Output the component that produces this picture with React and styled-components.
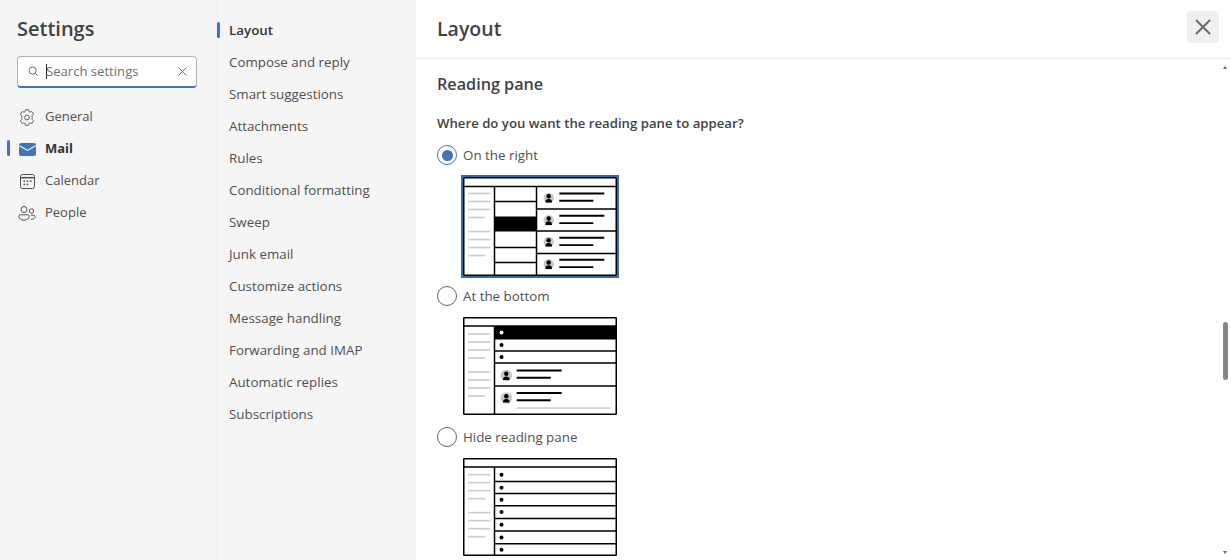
import React from 'react';
import styled, { createGlobalStyle } from 'styled-components';

const Global = createGlobalStyle`
  html, body { margin: 0; padding: 0; height: 100%; overflow: hidden; background: #fff; }
  #root { height: 100%; }
`;
const Page = styled.div`
  display: flex; height: 560px; width: 1231px; overflow: hidden;
  font-family: "Open Sans", "Noto Sans", sans-serif; color: #424242; font-size: 13.35px;
`;
const LeftPane = styled.aside`
  width: 216px; flex: none; background: #f5f5f5; border-right: 1px solid #eeeeee; box-sizing: content-box;
  padding-top: 14px;
`;
const Title = styled.h1`
  margin: 0 0 13px 17px; font-size: 20px; line-height: 29px; font-weight: 600; color: #424242;
`;
const SearchBox = styled.div`
  margin-left: 17px; width: 180px; height: 32px; box-sizing: border-box; background: #fff;
  border: 1px solid #b3b3b3; border-bottom: 2px solid #3f74bb; border-radius: 4px;
  display: flex; align-items: center; padding: 0 9px 1px 10px;
`;
const Caret = styled.span`
  width: 1px; height: 15px; background: #222; margin: 0 -1px 0 7px; flex: none;
`;
const SearchText = styled.span`
  flex: 1; color: #707070; font-size: 13.1px; white-space: nowrap;
`;
const NavList = styled.nav`
  margin-top: 12px; display: flex; flex-direction: column;
`;
const NavRow = styled.div`
  position: relative; height: 32px; display: flex; align-items: center; padding-left: 18px; gap: 9px;
  font-size: 13px;
  font-weight: ${p => (p.$active ? 700 : 400)}; color: ${p => (p.$active ? '#333' : '#505050')};
`;
const IconSlot = styled.span`
  width: 18px; height: 18px; flex: none; margin-top: 3px;
  display: flex; align-items: center; justify-content: center;
`;
const ActiveBar = styled.span`
  position: absolute; left: ${p => p.$left}px; top: 8px; width: 3px; height: 16px; border-radius: 2px; background: #3f74bb;
`;
const MiddlePane = styled.nav`
  width: 199px; flex: none; background: #f5f5f5; padding-top: 14px; display: flex; flex-direction: column;
`;
const SubRow = styled.div`
  position: relative; height: 32px; display: flex; align-items: center; padding-left: 12px; white-space: nowrap;
  font-weight: ${p => (p.$active ? 600 : 400)}; color: ${p => (p.$active ? '#333' : '#505050')};
`;
const Content = styled.main`
  position: relative; flex: 1; min-width: 0; display: flex; flex-direction: column; background: #fff;
`;
const Header = styled.header`
  height: 58px; flex: none; box-sizing: content-box; border-bottom: 1px solid #ededed;
  display: flex; align-items: center; justify-content: space-between; padding: 0 12px 0 21px;
`;
const HeaderTitle = styled.h2`
  margin: -2px 0 0; font-size: 19.5px; font-weight: 600; color: #424242;
`;
const CloseButton = styled.button`
  width: 32px; height: 32px; border: 0; border-radius: 4px; background: #f0f0f0; padding: 0;
  display: flex; align-items: center; justify-content: center; margin-top: -4px;
`;
const Body = styled.div`
  flex: 1; overflow: hidden; padding: 13px 0 0 21px;
`;
const SectionTitle = styled.h3`
  margin: 0; font-size: 16.2px; line-height: 24px; font-weight: 600; color: #424242;
`;
const Question = styled.div`
  margin-top: 18px; font-weight: 600; font-size: 13.2px; color: #424242; line-height: 18px;
`;
const Options = styled.div`
  margin-top: 13px; display: flex; flex-direction: column;
`;
const RadioRow = styled.div`
  display: flex; align-items: center; gap: 6px; height: 20px; color: #505050;
`;
const Radio = styled.span`
  width: 20px; height: 20px; box-sizing: border-box; border-radius: 50%; flex: none;
  border: 1px solid ${p => (p.$on ? '#3f74bb' : '#616161')};
  display: flex; align-items: center; justify-content: center;
  &::after { content: ''; width: 11px; height: 11px; border-radius: 50%; background: ${p => (p.$on ? '#3f74bb' : 'transparent')}; }
`;
const Preview = styled.div`
  margin: ${p => p.$mt}px 0 ${p => p.$mb}px 26px; width: 154px; height: ${p => p.$h}px; line-height: 0;
  outline: ${p => (p.$on ? '2px solid #3a689f' : 'none')}; outline-offset: 0;
`;
const Thumb = styled.div`
  position: absolute; right: 3px; top: 322px; width: 5px; height: 58px; border-radius: 3px; background: #858585;
`;
const Arrow = styled.div`
  position: absolute; right: 4px; top: ${p => p.$top}px; width: 0; height: 0;
  border-left: 2px solid transparent; border-right: 2px solid transparent;
  ${p => (p.$down ? 'border-top: 3px solid #666;' : 'border-bottom: 3px solid #666;')}
`;

const Gear = () => (
  <svg width="19" height="19" viewBox="0 0 20 20" fill="none" stroke="#505050" strokeWidth="1" strokeLinejoin="round">
    <path d="M8.2 1.5c1.2-.3 2.4-.3 3.6 0l.5 1.9c.1.5.7.8 1.2.6l1.9-.6c.8.9 1.5 2 1.8 3.1l-1.4 1.4c-.4.4-.4 1 0 1.4v1.4c-.4.4-.4 1 0 1.4l1.4 1.4c-.3 1.1-1 2.2-1.8 3.1l-1.9-.6c-.5-.2-1.1.1-1.2.6l-.5 1.9c-1.2.3-2.4.3-3.6 0l-.5-1.9c-.1-.5-.7-.8-1.2-.6l-1.9.6c-.8-.9-1.5-2-1.8-3.1l1.4-1.4c.4-.4.4-1 0-1.4V9.7c.4-.4.4-1 0-1.4L2.8 6.5C3.1 5.4 3.8 4.3 4.6 3.4l1.9.6c.5.2 1.1-.1 1.2-.6z" />
    <circle cx="10" cy="10" r="2.7" />
  </svg>
);
const MailIcon = () => (
  <svg width="17" height="13" viewBox="0 0 17 13">
    <rect width="17" height="13" rx="2" fill="#3f74bb" />
    <path d="M0.5 2.8 8.5 7.4l8-4.6" fill="none" stroke="#fff" strokeWidth="1.1" />
  </svg>
);
const CalendarIcon = () => (
  <svg width="15" height="15" viewBox="0 0 15 15" fill="none" stroke="#505050" strokeWidth="1">
    <rect x="0.5" y="0.5" width="14" height="14" rx="2" />
    <path d="M0.5 3.7h14" strokeWidth="1.5" />
    <g fill="#505050" stroke="none">
      <rect x="3.5" y="6.3" width="1.6" height="1.6" /><rect x="6.7" y="6.3" width="1.6" height="1.6" /><rect x="9.9" y="6.3" width="1.6" height="1.6" />
      <rect x="3.5" y="9.6" width="1.6" height="1.6" /><rect x="6.7" y="9.6" width="1.6" height="1.6" />
    </g>
  </svg>
);
const PeopleIcon = () => (
  <svg width="18" height="15" viewBox="0 0 18 15" fill="none" stroke="#505050" strokeWidth="1">
    <circle cx="6" cy="3.5" r="3" />
    <circle cx="13.5" cy="5" r="2.2" />
    <path d="M.8 10.2c0-.9.7-1.4 1.5-1.4h7.4c.8 0 1.5.5 1.5 1.4 0 2.2-2.3 4-5.2 4S.8 12.4.8 10.2z" />
    <path d="M12.8 9.2h2.9c.8 0 1.5.5 1.5 1.3 0 1.7-1.7 2.9-4.2 2.8" />
  </svg>
);
const SearchIcon = () => (
  <svg width="11" height="11" viewBox="0 0 12 12" fill="none" stroke="#616161" strokeWidth="1" style={{ flex: 'none' }}>
    <circle cx="5" cy="5" r="3.9" /><path d="M7.8 7.8 11 11" />
  </svg>
);
const Cross = ({ size, color, w }) => (
  <svg width={size} height={size} viewBox="0 0 16 16" fill="none" stroke={color} strokeWidth={w} style={{ flex: 'none' }}>
    <path d="M1 1l14 14M15 1 1 15" />
  </svg>
);

const SIDE_W = 31.5;
const Sidebar = ({ ys }) => ys.map((y, i) => (
  <line key={i} x1="5.3" x2={i % 4 === 3 ? 22 : 27.3} y1={y} y2={y} stroke="#cccccc" strokeWidth="1.7" />
));
const Avatar = ({ x, y, r = 5.8 }) => (
  <g>
    <circle cx={x} cy={y} r={r} fill="#c9c9c9" />
    <circle cx={x} cy={y - 1.8} r="2.2" fill="#000" />
    <path d={`M${x - 3.3} ${y + 4.6}c0-3 1.2-3.6 3.3-3.6s3.3.6 3.3 3.6z`} fill="#000" />
  </g>
);
const Lines = ({ x, y, long = 45, short = 34, gap = 7.3 }) => (
  <g stroke="#000" strokeWidth="1.9">
    <line x1={x} x2={x + long} y1={y} y2={y} />
    <line x1={x} x2={x + short} y1={y + gap} y2={y + gap} />
  </g>
);
const Frame = ({ h, head, children }) => (
  <svg width="154" height={h} viewBox={`0 0 154 ${h}`}>
    <rect x="0.75" y="0.75" width="152.5" height={h - 1.5} fill="#fff" stroke="#000" strokeWidth="1.5" rx="0.5" />
    <line x1="0" x2="154" y1={head} y2={head} stroke="#000" strokeWidth="1.5" />
    <line x1={SIDE_W} x2={SIDE_W} y1={head} y2={h} stroke="#000" strokeWidth="1.5" />
    {children}
  </svg>
);
const HLines = ({ x1, x2 = 154, ys }) => ys.map(y => (
  <line key={y} x1={x1} x2={x2} y1={y} y2={y} stroke="#000" strokeWidth="1.5" />
));
const Dots = ({ ys, fill = '#000' }) => ys.map(y => <circle key={y} cx="38.5" cy={y} r="2" fill={fill} />);

const RightDiagram = () => (
  <Frame h={99} head={9.5}>
    <Sidebar ys={[16.5, 24.5, 32.5, 40.5, 54.5, 62.5, 70.5, 78.5]} />
    <line x1="73.5" x2="73.5" y1="9" y2="99" stroke="#000" strokeWidth="1.5" />
    <rect x={SIDE_W} y="39.5" width="42" height="15" fill="#000" />
    <HLines x1={SIDE_W} x2={73.5} ys={[24.5, 70.5, 85.5]} />
    <HLines x1={73.5} ys={[32, 54, 76.5]} />
    {[21, 43.3, 65, 87.3].map(y => <Avatar key={y} x={85.7} y={y} r={5.2} />)}
    {[16.5, 38.8, 60.8, 82.8].map(y => <Lines key={y} x={96.3} y={y} />)}
  </Frame>
);
const BottomDiagram = () => (
  <Frame h={98} head={9}>
    <Sidebar ys={[17, 25, 33, 41, 55, 63, 71, 79]} />
    <rect x={SIDE_W} y="9" width="122.5" height="13.5" fill="#000" />
    <HLines x1={SIDE_W} ys={[34, 46, 69]} />
    <Dots ys={[15.5]} fill="#fff" />
    <Dots ys={[28, 40]} />
    <Avatar x={43.3} y={58.5} />
    <Avatar x={43.3} y={81} />
    <Lines x={53.7} y={53.5} />
    <Lines x={53.7} y={76} />
    <line x1="53.7" x2="147" y1="91" y2="91" stroke="#cccccc" strokeWidth="1.7" />
  </Frame>
);
const HiddenDiagram = () => (
  <Frame h={98} head={9}>
    <Sidebar ys={[16.7, 24.7, 32.7, 40.7, 54.7, 62.7, 70.7, 78.7]} />
    <HLines x1={SIDE_W} ys={[23.5, 35.5, 47.7, 60.5, 73, 85.7]} />
    <Dots ys={[16.7, 29.7, 41.7, 54, 66.7, 79.4, 91.7]} />
  </Frame>
);

const subItems = ['Layout', 'Compose and reply', 'Smart suggestions', 'Attachments', 'Rules', 'Conditional formatting', 'Sweep', 'Junk email', 'Customize actions', 'Message handling', 'Forwarding and IMAP', 'Automatic replies', 'Subscriptions'];

export default function App() {
  return (
    <Page>
      <Global />
      <LeftPane>
        <Title>Settings</Title>
        <SearchBox>
          <SearchIcon />
          <Caret />
          <SearchText>Search settings</SearchText>
          <Cross size={9} color="#616161" w={1.6} />
        </SearchBox>
        <NavList>
          <NavRow><IconSlot><Gear /></IconSlot>General</NavRow>
          <NavRow $active><ActiveBar $left={7} /><IconSlot><MailIcon /></IconSlot>Mail</NavRow>
          <NavRow><IconSlot><CalendarIcon /></IconSlot>Calendar</NavRow>
          <NavRow><IconSlot><PeopleIcon /></IconSlot>People</NavRow>
        </NavList>
      </LeftPane>
      <MiddlePane>
        {subItems.map((s, i) => (
          <SubRow key={s} $active={i === 0}>{i === 0 && <ActiveBar $left={0} />}{s}</SubRow>
        ))}
      </MiddlePane>
      <Content>
        <Header>
          <HeaderTitle>Layout</HeaderTitle>
          <CloseButton aria-label="Close"><Cross size={16} color="#6b6b6b" w={2} /></CloseButton>
        </Header>
        <Body>
          <SectionTitle>Reading pane</SectionTitle>
          <Question>Where do you want the reading pane to appear?</Question>
          <Options>
            <RadioRow><Radio $on />On the right</RadioRow>
            <Preview $on $mt={12} $mb={10} $h={99}><RightDiagram /></Preview>
            <RadioRow><Radio />At the bottom</RadioRow>
            <Preview $mt={11} $mb={12} $h={98}><BottomDiagram /></Preview>
            <RadioRow><Radio />Hide reading pane</RadioRow>
            <Preview $mt={11} $mb={0} $h={98}><HiddenDiagram /></Preview>
          </Options>
        </Body>
        <Arrow $top={66} />
        <Thumb />
        <Arrow $down $top={551} />
      </Content>
    </Page>
  );
}
